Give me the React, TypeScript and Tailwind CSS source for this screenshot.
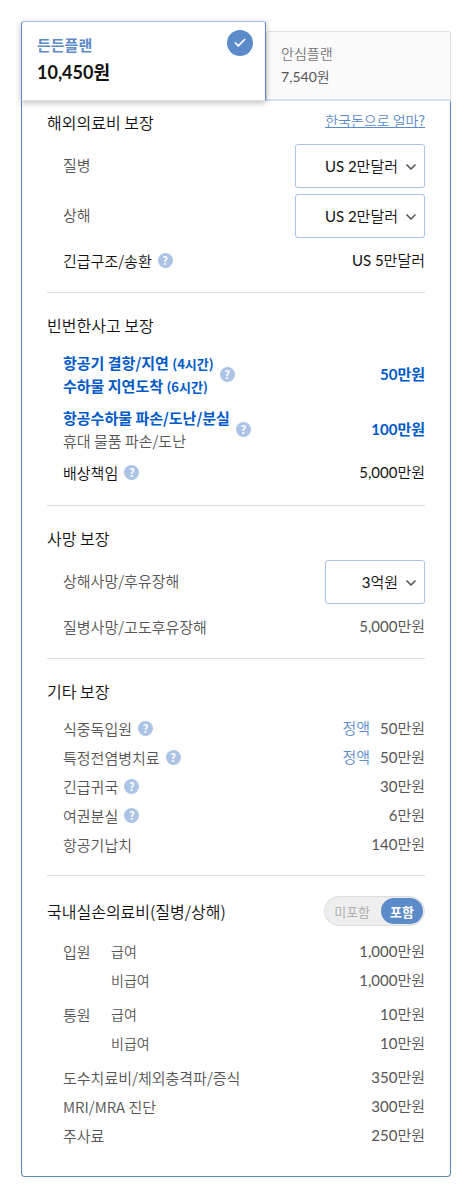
import React, { useState } from 'react';
import { Check, ChevronDown } from 'lucide-react';

interface Plan {
    id: string;
    name: string;
    price: string;
}

interface CoverageRowProps {
    label: React.ReactNode;
    value: string;
    help?: boolean;
    dark?: boolean;
    highlight?: boolean;
    fixed?: boolean;
}

interface SelectRowProps {
    id: string;
    label: string;
    options: string[];
    widthClass: string;
}

const PLANS: Plan[] = [
    { id: 'standard', name: '든든플랜', price: '10,450원' },
    { id: 'basic', name: '안심플랜', price: '7,540원' },
];

const ETC_ROWS = [
    { label: '식중독입원', value: '50만원', help: true, fixed: true },
    { label: '특정전염병치료', value: '50만원', help: true, fixed: true },
    { label: '긴급귀국', value: '30만원', help: true },
    { label: '여권분실', value: '6만원', help: true },
    { label: '항공기납치', value: '140만원' },
];

const MEDICAL_GROUPS = [
    { name: '입원', items: [{ label: '급여', value: '1,000만원' }, { label: '비급여', value: '1,000만원' }] },
    { name: '통원', items: [{ label: '급여', value: '10만원' }, { label: '비급여', value: '10만원' }] },
];

const MEDICAL_ROWS = [
    { label: '도수치료비/체외충격파/증식', value: '350만원' },
    { label: 'MRI/MRA 진단', value: '300만원' },
    { label: '주사료', value: '250만원' },
];

// Latin digits in Lato regular, Hangul one step lighter
const AMOUNT_FONT = "font-['Lato','Noto_Sans_CJK_KR_DemiLight','Noto_Sans_CJK_KR',sans-serif] font-normal";
const AMOUNT_FONT_BOLD = "font-['Lato','Noto_Sans_CJK_KR',sans-serif] font-bold";

const HelpButton: React.FC = () => (
    <button
        type="button"
        aria-label="도움말"
        className="flex size-[15px] shrink-0 items-center justify-center rounded-full bg-[#abc3e5] text-[11px] leading-none font-bold text-white"
    >
        ?
    </button>
);

const CoverageRow: React.FC<CoverageRowProps> = ({ label, value, help, dark, highlight, fixed }) => (
    <div className={`flex items-center justify-between ${dark ? 'text-[#111]' : 'text-[#555]'}`}>
        <dt className="flex items-center gap-[6px]">
            <span>{label}</span>
            {help && <HelpButton />}
        </dt>
        <dd className={highlight ? `${AMOUNT_FONT_BOLD} text-[#0059c9]` : AMOUNT_FONT}>
            {fixed && <span className="mr-[10px] text-[#5b8bc9]">정액</span>}
            {value}
        </dd>
    </div>
);

const SelectRow: React.FC<SelectRowProps> = ({ id, label, options, widthClass }) => (
    <div className="flex items-center justify-between">
        <dt>
            <label htmlFor={id} className="block pb-[3px] text-[#555]">{label}</label>
        </dt>
        <dd className={`relative ${widthClass}`}>
            <select
                id={id}
                className={`block h-11 w-full appearance-none rounded-[3px] border border-[#a9c2e5] bg-white pr-[26px] text-right text-[15px] text-[#111] [text-align-last:right] ${AMOUNT_FONT}`}
            >
                {options.map((option) => (
                    <option key={option}>{option}</option>
                ))}
            </select>
            <ChevronDown
                className="pointer-events-none absolute top-[15px] right-[6px] text-[#555]"
                size={16}
                strokeWidth={2.5}
            />
        </dd>
    </div>
);

const SectionTitle: React.FC<{ children: React.ReactNode }> = ({ children }) => (
    <h2 className="text-base leading-[22px] font-[350] text-[#111]">{children}</h2>
);

const App: React.FC = () => {
    const [planId, setPlanId] = useState('standard');
    const [included, setIncluded] = useState(true);

    return (
        <main className="bg-white p-[21px] pb-[11px] font-['Noto_Sans_CJK_KR',sans-serif] text-[15px] leading-[23px] font-[350]">
            {/* Plan tabs */}
            <div role="tablist" className="grid grid-cols-[57fr_43fr] items-end">
                {PLANS.map((plan) =>
                    plan.id === planId ? (
                        <button
                            key={plan.id}
                            type="button"
                            role="tab"
                            aria-selected="true"
                            className="relative z-10 flex h-20 flex-col items-start rounded-t-[3px] border border-[#5b8bc9] border-t-[#a0bfe8] border-b-[#ddd] bg-white px-[15px] pt-[11px] shadow-[0_2px_6px_rgba(0,0,0,0.25)]"
                        >
                            <span className="font-bold text-[#5b8bc9]">{plan.name}</span>
                            <span className={`text-lg leading-8 text-[#111] ${AMOUNT_FONT_BOLD}`}>{plan.price}</span>
                            <span className="absolute top-2 right-3 flex size-[26px] items-center justify-center rounded-full bg-[#5b8bc9] text-white">
                                <Check size={14} strokeWidth={3} />
                            </span>
                        </button>
                    ) : (
                        <button
                            key={plan.id}
                            type="button"
                            role="tab"
                            aria-selected="false"
                            onClick={() => setPlanId(plan.id)}
                            className="flex h-[70px] flex-col items-start rounded-t-[3px] border border-b-2 border-[#e0e0e0] border-b-[#d3e1f4] bg-[#fafafa] px-[14px] pt-[10px] text-sm leading-[23px]"
                        >
                            <span className="text-[#777]">{plan.name}</span>
                            <span className={`text-[#555] ${AMOUNT_FONT}`}>{plan.price}</span>
                        </button>
                    )
                )}
            </div>

            <div role="tabpanel" className="rounded-b-[4px] border border-t-0 border-[#5b8bc9] px-[25px]">
                {/* Overseas medical */}
                <section className="border-b border-[#ddd] pt-[10px] pb-5">
                    <div className="flex items-start justify-between">
                        <SectionTitle>해외의료비 보장</SectionTitle>
                        <a href="#exchange" className="text-sm leading-[18px] text-[#5b8bc9] underline">한국돈으로 얼마?</a>
                    </div>
                    <dl className="mt-[11px] pl-4">
                        <div className="flex flex-col gap-[6px]">
                            <SelectRow id="disease" label="질병" options={['US 2만달러', 'US 3만달러', 'US 5만달러']} widthClass="w-[130px]" />
                            <SelectRow id="injury" label="상해" options={['US 2만달러', 'US 3만달러', 'US 5만달러']} widthClass="w-[130px]" />
                        </div>
                        <div className="mt-[11px]">
                            <CoverageRow label="긴급구조/송환" value="US 5만달러" help dark />
                        </div>
                    </dl>
                </section>

                {/* Frequent accidents */}
                <section className="border-b border-[#ddd] pt-[21px] pb-[21px]">
                    <SectionTitle>빈번한사고 보장</SectionTitle>
                    <dl className="mt-[15px] flex flex-col gap-[9px] pl-4">
                        <CoverageRow
                            label={
                                <>
                                    <strong className="block font-bold text-[#0059c9]">항공기 결항/지연 <span className="text-[13px] leading-none">(4시간)</span></strong>
                                    <strong className="block font-bold text-[#0059c9]">수하물 지연도착 <span className="text-[13px] leading-none">(6시간)</span></strong>
                                </>
                            }
                            value="50만원"
                            help
                            highlight
                        />
                        <CoverageRow
                            label={
                                <>
                                    <strong className="block font-bold text-[#0059c9]">항공수하물 파손/도난/분실</strong>
                                    휴대 물품 파손/도난
                                </>
                            }
                            value="100만원"
                            help
                            highlight
                        />
                        <CoverageRow label="배상책임" value="5,000만원" help dark />
                    </dl>
                </section>

                {/* Death */}
                <section className="border-b border-[#ddd] pt-[21px] pb-5">
                    <SectionTitle>사망 보장</SectionTitle>
                    <dl className="mt-[11px] flex flex-col gap-[11px] pl-4">
                        <SelectRow id="death" label="상해사망/후유장해" options={['3억원', '2억원', '1억원']} widthClass="w-[100px]" />
                        <CoverageRow label="질병사망/고도후유장해" value="5,000만원" />
                    </dl>
                </section>

                {/* Others */}
                <section className="border-b border-[#ddd] pt-[21px] pb-[19px]">
                    <SectionTitle>기타 보장</SectionTitle>
                    <dl className="mt-[15px] flex flex-col gap-[6px] pl-4">
                        {ETC_ROWS.map((row) => (
                            <CoverageRow key={row.label} {...row} />
                        ))}
                    </dl>
                </section>

                {/* Domestic medical */}
                <section className="pt-5 pb-[29px]">
                    <div className="flex items-center justify-between">
                        <SectionTitle>국내실손의료비(질병/상해)</SectionTitle>
                        <div role="radiogroup" className="relative flex h-[30px] items-center rounded-full border border-[#ddd] bg-[#eee] p-px text-[13px]">
                            <label className="cursor-pointer">
                                <input
                                    type="radio"
                                    name="domestic"
                                    className="peer sr-only"
                                    checked={!included}
                                    onChange={() => setIncluded(false)}
                                />
                                <span className="flex h-[26px] items-center rounded-full pr-[11px] pl-2 text-[#aaa] peer-checked:bg-[#5b8bc9] peer-checked:font-bold peer-checked:text-white">
                                    미포함
                                </span>
                            </label>
                            <label className="cursor-pointer">
                                <input
                                    type="radio"
                                    name="domestic"
                                    className="peer sr-only"
                                    checked={included}
                                    onChange={() => setIncluded(true)}
                                />
                                <span className="flex h-[26px] items-center rounded-full px-[9px] text-[#aaa] peer-checked:bg-[#5b8bc9] peer-checked:font-bold peer-checked:text-white">
                                    포함
                                </span>
                            </label>
                        </div>
                    </div>
                    <div className="mt-[14px] flex flex-col gap-[11px] pl-4 text-[#555]">
                        {MEDICAL_GROUPS.map((group) => (
                            <div key={group.name} className="flex">
                                <h3 className="w-12">{group.name}</h3>
                                <dl className="flex flex-1 flex-col gap-[6px]">
                                    {group.items.map((item) => (
                                        <CoverageRow
                                            key={item.label}
                                            label={<span className="block text-sm leading-[23px]">{item.label}</span>}
                                            value={item.value}
                                        />
                                    ))}
                                </dl>
                            </div>
                        ))}
                        <dl className="flex flex-col gap-[6px]">
                            {MEDICAL_ROWS.map((row) => (
                                <CoverageRow key={row.label} {...row} />
                            ))}
                        </dl>
                    </div>
                </section>
            </div>
        </main>
    );
};

export default App;
